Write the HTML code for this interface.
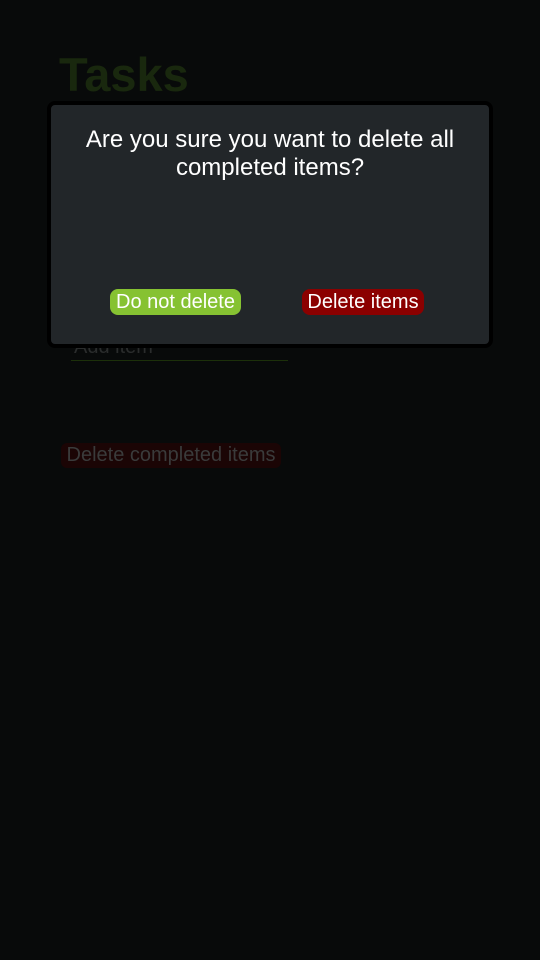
<!DOCTYPE html>
<html><head><style>
body{margin:0;width:540px;height:960px;background:#080a0a;font-family:"Liberation Sans",sans-serif;position:relative;overflow:hidden}
.a{position:absolute}
</style></head><body>
<div class="a" style="left:59px;top:48px;font-size:47px;font-weight:bold;color:#19280e;line-height:54px">Tasks</div>
<div class="a" style="left:74px;top:335px;font-size:20px;color:#2a2c2c;line-height:24px">Add item</div>
<div class="a" style="left:71px;top:360px;width:217px;height:1px;background:#1c300a"></div>
<div class="a" style="left:61px;top:443px;width:220px;height:25px;background:#1b0505;border-radius:6px;color:#3a3b3b;font-size:20px;line-height:25px;text-align:center">Delete completed items</div>
<div class="a" style="left:47px;top:101px;width:438px;height:239px;border:4px solid #000;border-radius:8px;background:#222629">
<div class="a" style="left:0;top:21px;width:438px;text-align:center;color:#fff;font-size:24px;line-height:28px">Are you sure you want to delete all<br>completed items?</div>
<div class="a" style="left:59px;top:184px;width:131px;height:26px;background:#86c232;border-radius:8px;color:#fff;font-size:20px;line-height:26px;text-align:center">Do not delete</div>
<div class="a" style="left:251px;top:184px;width:122px;height:26px;background:#8b0000;border-radius:8px;color:#fff;font-size:20px;line-height:26px;text-align:center">Delete items</div>
</div>
</body></html>
